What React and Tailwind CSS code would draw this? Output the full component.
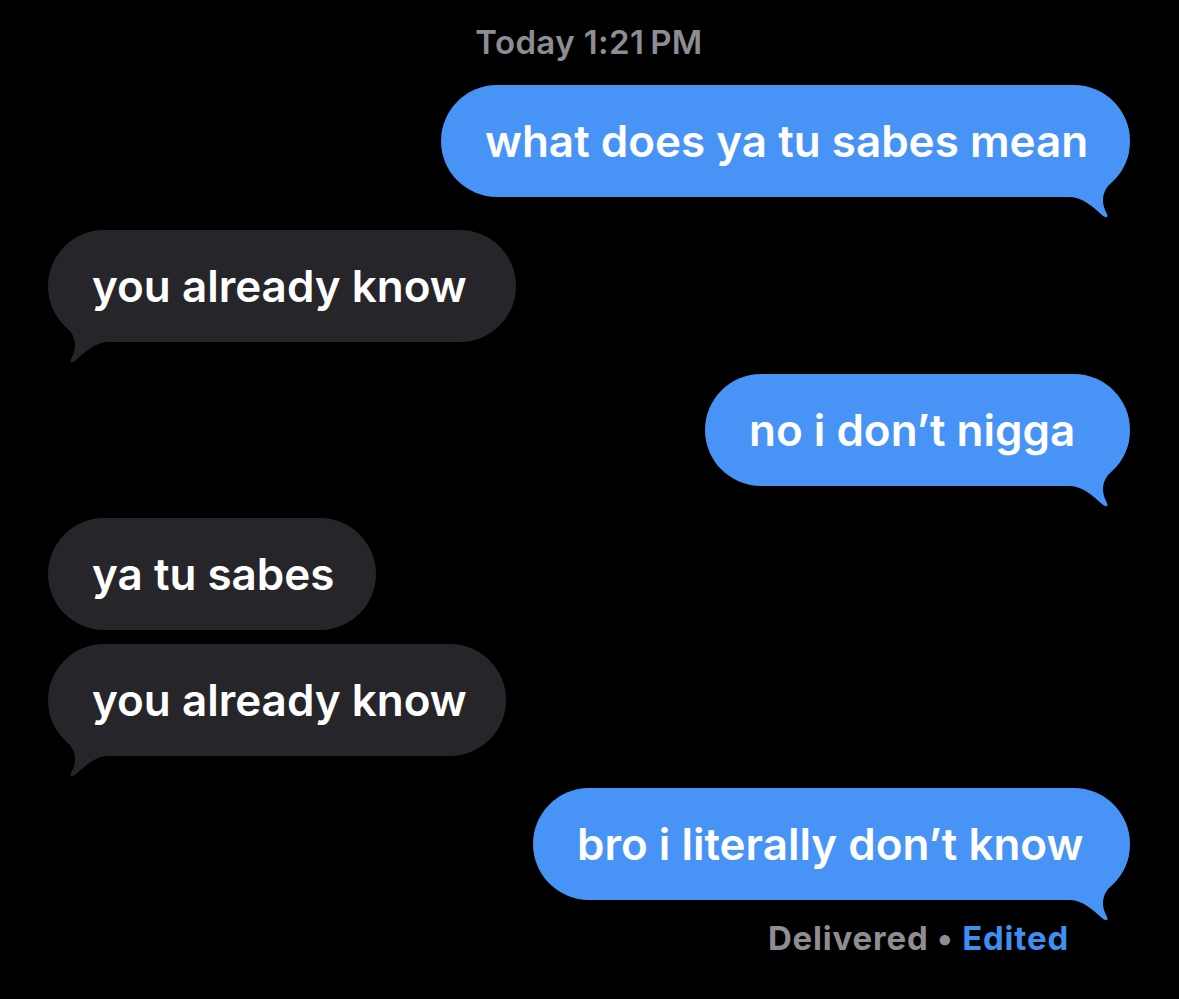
const BLUE = "#4893f6";
const GRAY = "#262529";

// iMessage-style tail, drawn for the right side and mirrored for the left
const Tail = ({ side, color }) => (
  <svg
    width="75"
    height="68"
    viewBox="0 0 75 68"
    className={
      side === "right"
        ? "absolute right-[-5px] bottom-[-23px]"
        : "absolute left-[-5px] bottom-[-23px] -scale-x-100"
    }
  >
    <path
      d="M0 45 L10 45 C22 45 33 55 42 63 C45 66 49 66 47 62 C42 53 41 43 48 34 C56 26 65 18 69 0 L0 0 Z"
      fill={color}
    />
  </svg>
);

const Bubble = ({ text, mine, width, tail }) => (
  <div className={mine ? "flex justify-end" : "flex justify-start"}>
    <div
      className={`relative flex h-[112px] items-center rounded-full px-[44px] ${
        mine ? "bg-[#4893f6]" : "bg-[#262529]"
      } ${width}`}
    >
      <span className="relative z-10 whitespace-nowrap text-[44px] leading-[53px] font-semibold text-white">
        {text}
      </span>
      {tail && <Tail side={mine ? "right" : "left"} color={mine ? BLUE : GRAY} />}
    </div>
  </div>
);

export default function App() {
  return (
    <div className="min-h-[999px] w-[1179px] bg-black pl-[48px] pr-[49px] pt-[22px] font-['Inter',sans-serif]">
      <div className="text-center text-[33px] leading-[40px] font-semibold tracking-[0.4px] text-[#8d8d92]">
        Today 1:21{"\u202F"}PM
      </div>

      <div className="mt-[23px] flex flex-col">
        <Bubble text="what does ya tu sabes mean" mine width="w-[689px]" tail />
        <div className="mt-[33px]">
          <Bubble text="you already know" width="w-[468px]" tail />
        </div>
        <div className="mt-[32px]">
          <Bubble text="no i don’t nigga" mine width="w-[425px]" tail />
        </div>
        <div className="mt-[32px]">
          <Bubble text="ya tu sabes" width="w-[328px]" />
        </div>
        <div className="mt-[14px]">
          <Bubble text="you already know" width="w-[458px]" tail />
        </div>
        <div className="mt-[32px]">
          <Bubble text="bro i literally don’t know" mine width="w-[597px]" tail />
        </div>
      </div>

      <div className="mt-[18px] pr-[61px] text-right text-[33px] leading-[40px] font-bold tracking-[0.8px]">
        <span className="text-[#8d8d92]">Delivered • </span>
        <span className="text-[#3d8ff2]">Edited</span>
      </div>
    </div>
  );
}
